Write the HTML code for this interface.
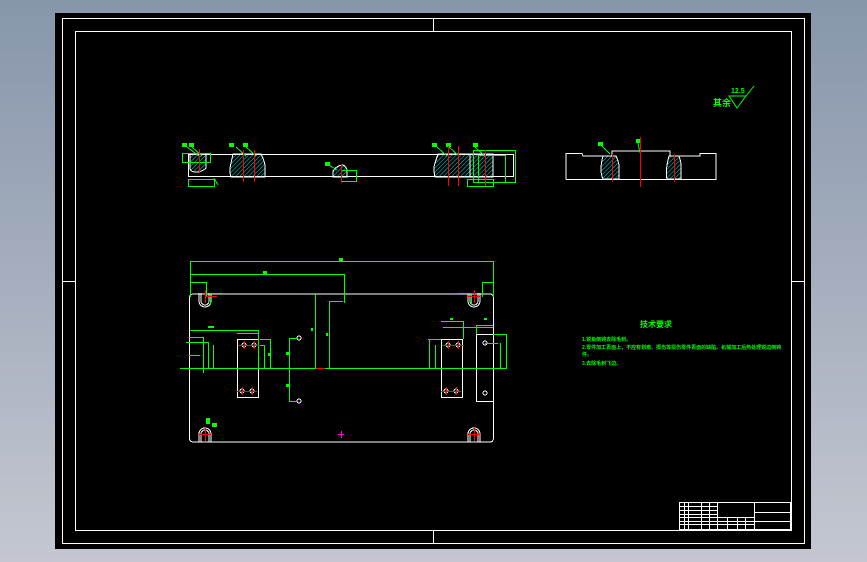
<!DOCTYPE html>
<html><head><meta charset="utf-8"><style>
html,body{margin:0;padding:0;width:867px;height:562px;overflow:hidden;background:linear-gradient(#8796ab,#c4c7d1);}
svg{position:absolute;left:0;top:0}
text{font-family:"Liberation Sans","Noto Sans CJK SC",sans-serif;fill:#00ff00;font-weight:bold}
</style></head><body>
<svg width="867" height="562" viewBox="0 0 867 562" shape-rendering="crispEdges">
<defs>
<pattern id="h" width="3" height="3" patternUnits="userSpaceOnUse" patternTransform="rotate(45)">
<line x1="0" y1="0" x2="0" y2="3" stroke="#00e0e0" stroke-width="1"/></pattern>
</defs>
<rect x="55" y="13" width="756" height="536" fill="#000"/>
<g fill="none" stroke="#fff" stroke-width="1">
<rect x="62.5" y="18.5" width="742" height="525"/>
<rect x="75.5" y="31.5" width="716" height="499"/>
<line x1="433.5" y1="18" x2="433.5" y2="31"/><line x1="433.5" y1="530" x2="433.5" y2="543"/>
<line x1="62" y1="281.5" x2="75" y2="281.5"/><line x1="791" y1="281.5" x2="804" y2="281.5"/>
<rect x="679.5" y="502.5" width="111" height="27"/>
<line x1="684.5" y1="502" x2="684.5" y2="530"/><line x1="688.5" y1="502" x2="688.5" y2="530"/>
<line x1="701.5" y1="502" x2="701.5" y2="530"/><line x1="709.5" y1="502" x2="709.5" y2="530"/>
<line x1="717.5" y1="502" x2="717.5" y2="530"/><line x1="754.5" y1="502" x2="754.5" y2="530"/>
<line x1="679" y1="506.5" x2="717" y2="506.5"/><line x1="679" y1="510.5" x2="717" y2="510.5"/>
<line x1="679" y1="514.5" x2="717" y2="514.5"/><line x1="679" y1="517.5" x2="754" y2="517.5"/>
<line x1="679" y1="521.5" x2="754" y2="521.5"/><line x1="679" y1="524.5" x2="754" y2="524.5"/>
<line x1="754" y1="512.5" x2="791" y2="512.5"/><line x1="754" y1="521.5" x2="791" y2="521.5"/>
<line x1="727.5" y1="517" x2="727.5" y2="530"/><line x1="737.5" y1="517" x2="737.5" y2="530"/><line x1="745.5" y1="517" x2="745.5" y2="530"/>
<rect x="188.5" y="154.5" width="325" height="22"/>
<polyline points="566,179.5 566,153.5 582,153.5 583,156 612,156 612,151 670,151 670,156 700,156 700,153.5 716,153.5 716,179.5 566,179.5"/>
<path d="M189.5,298 v140 q0,4 4,4 h296 q4,0 4,-4 v-140 q0,-4 -4,-4 h-296 q-4,0 -4,4z"/>
<rect x="237.5" y="339.5" width="21" height="58"/>
<rect x="441.5" y="339.5" width="21" height="58"/>
<rect x="476.5" y="334.5" width="17" height="67"/>
<path d="M199,293 v8 a6,6 0 0 0 12,0 v-8 M201,293 v8 a4,4 0 0 0 8,0 v-8"/>
<path d="M468,293 v8 a6,6 0 0 0 12,0 v-8 M470,293 v8 a4,4 0 0 0 8,0 v-8"/>
<path d="M199,442 v-8 a6,6 0 0 1 12,0 v8 M201,442 v-8 a4,4 0 0 1 8,0 v8"/>
<path d="M468,442 v-8 a6,6 0 0 1 12,0 v8 M470,442 v-8 a4,4 0 0 1 8,0 v8"/>
<circle cx="244" cy="345" r="2"/><circle cx="254" cy="345" r="2"/><circle cx="242" cy="391" r="2"/><circle cx="252" cy="391" r="2"/>
<circle cx="448" cy="345" r="2"/><circle cx="458" cy="345" r="2"/><circle cx="446" cy="391" r="2"/><circle cx="456" cy="391" r="2"/>
<circle cx="485" cy="343" r="2"/><circle cx="485" cy="393" r="2"/><circle cx="299" cy="338" r="2"/><circle cx="299" cy="401" r="2"/>
</g>
<g fill="url(#h)" stroke="#fff" stroke-width="1">
<path d="M190,154 h16 v14 q-4,4 -10,4 q-6,0 -6,-4z"/>
<path d="M233,154 h28 q4,8 4,12 v11 h-34 q-2,-6 0,-14z"/>
<path d="M333,177 v-6 q4,-6 10,-6 q4,2 4,6 v6z"/>
<path d="M438,154 h32 v23 h-35 q-2,-8 0,-14z"/>
<path d="M470,154 h23 v23 h-23z"/>
<path d="M603,156 h13 q4,8 3,16 v7 h-16 q-4,-8 0,-23z"/>
<path d="M669,156 h10 q3,8 2,16 v7 h-14 q-2,-8 2,-23z"/>
</g>
<g fill="none" stroke="#00ff00" stroke-width="1">
<rect x="182.5" y="153.5" width="28" height="9"/><rect x="188.5" y="179.5" width="26" height="7"/>
<rect x="341.5" y="170.5" width="15" height="11"/><rect x="467.5" y="179.5" width="26" height="7"/>
<rect x="473.5" y="150.5" width="42" height="32"/><rect x="478.5" y="155.5" width="27" height="27"/>
<path d="M187,147 l12,9 M192,147 l10,9 M236,147 l10,9 M246,147 l10,9 M437,147 l10,9 M449,147 l10,9 M475,147 l10,9 M329,165 l8,5 M600,144 l10,10 M638,143 l2,10 M214,178 l4,7"/>
<polyline points="190.5,297 190.5,261.5 493.5,261.5 493.5,297"/>
<polyline points="190,274.5 344.5,274.5 344.5,303"/>
<polyline points="190,282.5 206.5,282.5 206.5,297"/><polyline points="482.5,297 482.5,282.5 493,282.5"/>
<polyline points="210.5,305 210.5,293.5 222,293.5"/><polyline points="459,293.5 471.5,293.5 471.5,305"/>
<line x1="315.5" y1="293" x2="315.5" y2="368"/><polyline points="329.5,368 329.5,301.5 343,301.5"/>
<line x1="180" y1="368.5" x2="507" y2="368.5"/>
<polyline points="190,330.5 258.5,330.5 258.5,368"/><polyline points="237,333.5 258,333.5"/><polyline points="260,339.5 270.5,339.5 270.5,368"/><polyline points="258,345.5 264.5,345.5 264.5,368"/>
<polyline points="189,337.5 203.5,337.5 203.5,373"/><polyline points="186,342.5 208.5,342.5 208.5,368"/><polyline points="213.5,345 213.5,368"/><polyline points="189,355.5 200,355.5"/>
<polyline points="289.5,338.5 298,338.5"/><polyline points="289.5,338 289.5,401.5 298,401.5"/>
<polyline points="441,321.5 463.5,321.5 463.5,339"/><polyline points="443,327.5 493,327.5"/><polyline points="428,339.5 441,339.5"/><polyline points="429.5,339 429.5,368"/><polyline points="435.5,345 435.5,368"/>
<polyline points="476.5,334 476.5,325.5 493,325.5"/><polyline points="493,334.5 506.5,334.5 506.5,368"/><polyline points="500.5,343 500.5,368"/><polyline points="485,343.5 498,343.5"/>
<path d="M729,96 h17 l-9,12z M746,96 l8,-10" shape-rendering="auto"/>
</g>
<g fill="#00ff00">
<rect x="182" y="143" width="5" height="4"/><rect x="189" y="143" width="5" height="4"/><rect x="229" y="143" width="5" height="4"/><rect x="243" y="143" width="5" height="4"/>
<rect x="432" y="143" width="5" height="4"/><rect x="446" y="143" width="5" height="4"/><rect x="473" y="143" width="5" height="4"/><rect x="325" y="162" width="5" height="4"/><rect x="598" y="142" width="5" height="4"/><rect x="636" y="139" width="4" height="4"/>
<rect x="339" y="258" width="4" height="3"/><rect x="263" y="271" width="4" height="3"/><rect x="311" y="328" width="2" height="3"/><rect x="326" y="333" width="2" height="3"/>
<rect x="208" y="326" width="6" height="2"/><rect x="450" y="318" width="3" height="2"/><rect x="484" y="318" width="3" height="2"/><rect x="268" y="353" width="3" height="3"/><rect x="286" y="352" width="3" height="3"/><rect x="286" y="384" width="3" height="3"/>
<rect x="206" y="418" width="4" height="6"/><rect x="212" y="423" width="5" height="4"/>
</g>
<g stroke="#ff0000" stroke-width="1">
<line x1="199.5" y1="149" x2="199.5" y2="173"/><line x1="243.5" y1="150" x2="243.5" y2="182"/><line x1="254.5" y1="150" x2="254.5" y2="182"/>
<line x1="341.5" y1="164" x2="341.5" y2="183"/><line x1="448.5" y1="146" x2="448.5" y2="186"/><line x1="458.5" y1="146" x2="458.5" y2="186"/><line x1="485.5" y1="150" x2="485.5" y2="186"/>
<line x1="640.5" y1="137" x2="640.5" y2="187"/><line x1="612.5" y1="154" x2="612.5" y2="182"/><line x1="674.5" y1="154" x2="674.5" y2="182"/>
<line x1="316" y1="368.5" x2="325" y2="368.5"/>
<path d="M205,296.5 h12 M205.5,290 v13 M468,296.5 h12 M474.5,290 v13 M199,434.5 h12 M205.5,428 v13 M468,434.5 h12 M474.5,428 v13"/>
<path d="M238,345.5 h22 M244.5,341 v8 M254.5,341 v8 M237,391.5 h20 M242.5,387 v8 M252.5,387 v8 M442,345.5 h22 M448.5,341 v8 M458.5,341 v8 M441,391.5 h20 M446.5,387 v8 M456.5,387 v8"/>
</g>
<path d="M338,434.5 h6 M341.5,431 v7" stroke="#ff00ff"/>
<text x="640" y="327" font-size="8">技术要求</text>
<text x="582" y="341" font-size="5">1.锐角倒钝去除毛刺。</text>
<text x="582" y="349" font-size="5">2.零件加工表面上，不应有划痕、擦伤等损伤零件表面的缺陷。机械加工后热处理锐边倒钝</text>
<text x="582" y="356" font-size="5">件。</text>
<text x="582" y="365" font-size="5">3.去除毛刺飞边。</text>
<text x="713" y="106" font-size="9">其余</text>
<text x="731" y="93" font-size="7">12.5</text>
</svg>
</body></html>
